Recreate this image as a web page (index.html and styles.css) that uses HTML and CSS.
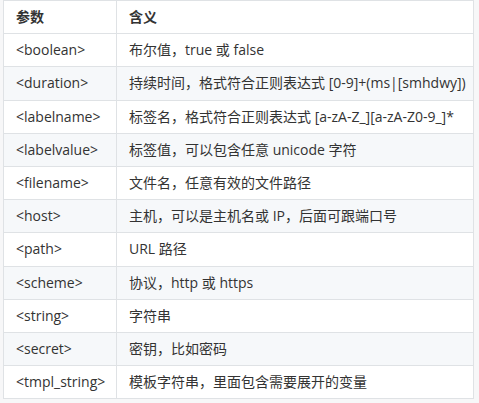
FILE: index.html
```html
<!DOCTYPE html>
<html lang="zh-CN">
<head>
<meta charset="utf-8">
<link rel="stylesheet" href="styles.css">
</head>
<body>
<div class="wrap">
<table class="params">
<thead>
<tr><th class="c1">参数</th><th>含义</th></tr>
</thead>
<tbody>
<tr><td>&lt;boolean&gt;</td><td>布尔值，true 或 false</td></tr>
<tr><td>&lt;duration&gt;</td><td>持续时间，格式符合正则表达式 [0-9]+(ms|[smhdwy])</td></tr>
<tr><td>&lt;labelname&gt;</td><td>标签名，格式符合正则表达式 [a-zA-Z_][a-zA-Z0-9_]*</td></tr>
<tr><td>&lt;labelvalue&gt;</td><td>标签值，可以包含任意 unicode 字符</td></tr>
<tr><td>&lt;filename&gt;</td><td>文件名，任意有效的文件路径</td></tr>
<tr><td>&lt;host&gt;</td><td>主机，可以是主机名或 IP，后面可跟端口号</td></tr>
<tr><td>&lt;path&gt;</td><td>URL 路径</td></tr>
<tr><td>&lt;scheme&gt;</td><td>协议，http 或 https</td></tr>
<tr><td>&lt;string&gt;</td><td>字符串</td></tr>
<tr><td>&lt;secret&gt;</td><td>密钥，比如密码</td></tr>
<tr><td>&lt;tmpl_string&gt;</td><td>模板字符串，里面包含需要展开的变量</td></tr>
</tbody>
</table>
</div>
</body>
</html>
```
FILE: styles.css
```css
html, body {
  margin: 0;
  padding: 0;
  background: #f7f7f8;
}
.wrap {
  padding: 0 5px 0 3px;
}
.params {
  width: 471px;
  border-collapse: collapse;
  background: #fff;
  font-family: "Open Sans", "Noto Sans CJK SC", sans-serif;
  font-size: 14px;
  color: #333;
  table-layout: fixed;
}
.params th, .params td {
  border: 1px solid #dfe2e5;
  padding: 6px 12px;
  line-height: 20.2px;
  text-align: left;
  white-space: nowrap;
}
.params th {
  font-weight: bold;
}
.params th.c1 {
  width: 88px;
}
.params tbody tr:nth-child(even) {
  background: #f6f8fa;
}
```
